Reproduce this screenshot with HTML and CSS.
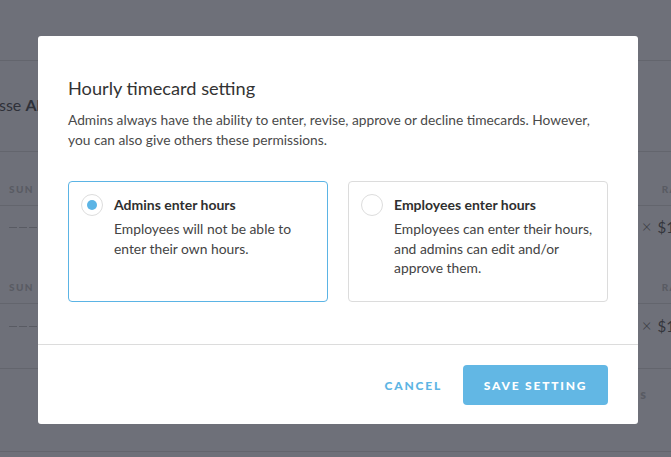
FILE: index.html
```html
<!DOCTYPE html>
<html>
<head>
<meta charset="utf-8">
<link rel="stylesheet" href="styles.css">
</head>
<body>
<div class="page">
  <div class="bg-top"></div>
  <div class="bg-head"><span class="cut">sse <b>Al</b></span></div>
  <div class="bg-row label-row"><span class="day">SUN</span><span class="rate">RA</span></div>
  <div class="bg-row value-row"><span class="dash"></span><span class="times">×</span><span class="amt">$1</span></div>
  <div class="bg-row label-row"><span class="day">SUN</span><span class="rate">RA</span></div>
  <div class="bg-row value-row last"><span class="dash"></span><span class="times">×</span><span class="amt">$1</span></div>
  <div class="bg-foot"><span class="total">s</span></div>
</div>

<div class="modal">
  <div class="modal-body">
    <h2 class="modal-title">Hourly timecard setting</h2>
    <p class="modal-text">Admins always have the ability to enter, revise, approve or decline timecards. However, you can also give others these permissions.</p>
    <div class="options">
      <div class="option selected">
        <span class="radio"><span class="dot"></span></span>
        <div class="option-copy">
          <div class="option-title">Admins enter hours</div>
          <div class="option-desc">Employees will not be able to enter their own hours.</div>
        </div>
      </div>
      <div class="option">
        <span class="radio"></span>
        <div class="option-copy">
          <div class="option-title">Employees enter hours</div>
          <div class="option-desc">Employees can enter their hours, and admins can edit and/or approve them.</div>
        </div>
      </div>
    </div>
  </div>
  <div class="modal-footer">
    <button class="btn-cancel">Cancel</button>
    <button class="btn-save">Save setting</button>
  </div>
</div>
</body>
</html>
```
FILE: styles.css
```css
* { box-sizing: border-box; }
html, body { margin: 0; padding: 0; }
body {
  width: 671px;
  height: 457px;
  overflow: hidden;
  background: #6e7079;
  font-family: Lato, "Open Sans", sans-serif;
  position: relative;
}
.page { width: 671px; overflow: hidden; }
.bg-top { height: 61px; border-bottom: 1px solid #63656d; }
.bg-head {
  height: 91px;
  border-bottom: 1px solid #63656d;
  display: flex;
  align-items: center;
  padding-bottom: 4px;
}
.cut { margin-left: -1px; font-size: 16px; color: #2f3139; white-space: nowrap; }
.cut b { font-weight: 700; }
.bg-row { display: flex; }
.label-row {
  height: 54px;
  border-bottom: 1px solid #63656d;
  align-items: flex-end;
  padding-bottom: 10px;
}
.value-row { height: 44px; align-items: center; padding-bottom: 2px; }
.value-row.last { height: 64px; align-items: flex-start; padding-top: 14px; }
.day { margin-left: 9px; font-size: 10px; font-weight: 900; letter-spacing: 1.4px; color: #595b63; }
.rate { margin-left: auto; margin-right: -7px; font-size: 10px; font-weight: 900; letter-spacing: 1.4px; color: #595b63; }
.dash {
  margin-left: 9px;
  width: 40px;
  height: 1px;
  align-self: center;
  background: repeating-linear-gradient(90deg, #595b63 0 8px, transparent 8px 10px);
}
.value-row.last .dash { margin-top: 8px; align-self: flex-start; }
.times { margin-left: auto; font-size: 17px; font-weight: 300; color: #3a3c43; margin-right: 6px; line-height: 16px; }
.amt { font-size: 15px; color: #33353c; margin-right: -4px; line-height: 16px; }
.bg-foot {
  height: 84px;
  border-top: 1px solid #63656d;
  border-bottom: 1px solid #63656d;
  display: flex;
  align-items: flex-start;
  justify-content: flex-end;
  padding-top: 17px;
}
.total { font-size: 13px; font-weight: 900; color: #595b63; margin-right: 25px; }

.modal {
  position: absolute;
  left: 38px;
  top: 36px;
  width: 600px;
  height: 388px;
  background: #fff;
  border-radius: 3px;
  display: flex;
  flex-direction: column;
}
.modal-body { padding: 40px 30px 0; height: 309px; border-bottom: 1px solid #dcdcdc; }
.modal-title {
  margin: 0;
  font-size: 18.2px;
  line-height: 24px;
  font-weight: 400;
  color: #333;
}
.modal-text {
  margin: 10px 0 0;
  font-size: 13.75px;
  line-height: 20px;
  color: #4a4a4a;
}
.options { display: flex; gap: 20px; margin-top: 31px; }
.option {
  width: 260px;
  height: 121px;
  border: 1px solid #dcdcdc;
  border-radius: 4px;
  padding: 12px 12px 0;
  display: flex;
  gap: 11px;
}
.option.selected { border-color: #5bb4e5; }
.radio {
  flex: none;
  width: 22px;
  height: 22px;
  border: 1px solid #dddddd;
  border-radius: 50%;
  display: flex;
  align-items: center;
  justify-content: center;
}
.dot { width: 10px; height: 10px; border-radius: 50%; background: #5bb4e5; }
.option-copy { padding-top: 1px; }
.option-title { font-size: 14px; line-height: 20px; font-weight: 700; color: #2f2f2f; }
.option-desc { margin-top: 4px; font-size: 13.85px; line-height: 19.5px; color: #444; }
.modal-footer {
  flex: 1;
  display: flex;
  justify-content: flex-end;
  align-items: flex-start;
  padding: 20px 30px 0;
  gap: 21px;
}
.btn-cancel, .btn-save {
  font-family: Lato, "Open Sans", sans-serif;
  font-size: 12px;
  font-weight: 900;
  letter-spacing: 1.8px;
  text-transform: uppercase;
  height: 40px;
  border: none;
  cursor: pointer;
}
.btn-cancel { background: none; color: #5db5e4; padding: 0; }
.btn-save {
  width: 145px;
  background: #62b7e4;
  color: #fff;
  border-radius: 4px;
}
```
